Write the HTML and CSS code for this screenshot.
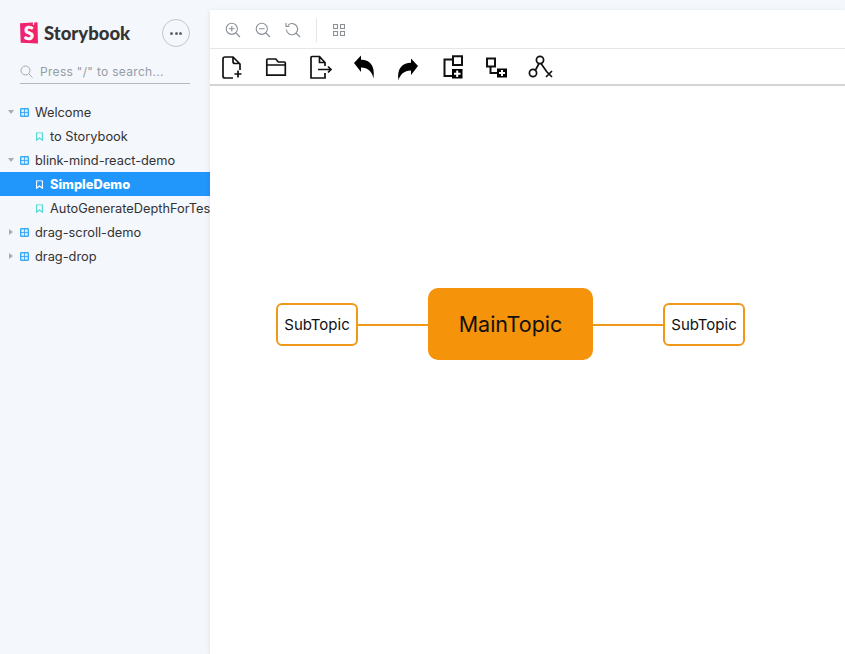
FILE: index.html
```html
<!DOCTYPE html>
<html lang="en">
<head>
<meta charset="utf-8">
<title>Storybook</title>
<link rel="stylesheet" href="styles.css">
</head>
<body>
<div class="app">
  <aside class="sidebar">
    <div class="brand">
      <div class="logo">
        <svg class="logo-mark" width="18" height="22" viewBox="0 0 18 22"><path d="M0 1.200 13 .6l-.1 2.400 1.200-.1.100-2.400L17.500 .3 18 21.500 .7 20.700z" fill="#f0246e"/><text x="9" y="17.500" class="logo-s">S</text></svg>
        <span class="logo-text">Storybook</span>
      </div>
      <button class="menu-btn" type="button"><span class="dot"></span><span class="dot"></span><span class="dot"></span></button>
    </div>
    <div class="search">
      <svg width="13" height="13" viewBox="0 0 13 13" fill="none" stroke="#a3abb3" stroke-width="1"><circle cx="5.500" cy="5.500" r="4.500"/><path d="M9 9l3.500 3.500"/></svg>
      <span class="search-text">Press "/" to search...</span>
    </div>
    <nav class="tree">
      <div class="row group"><svg class="arrow" width="6" height="4" viewBox="0 0 6 4"><path d="M0 0h6L3 4z"/></svg><svg class="comp" width="9" height="9" viewBox="0 0 10 10"><use href="#comp"/></svg><span>Welcome</span></div>
      <div class="row story"><svg class="mark" width="7" height="9" viewBox="0 0 8 10"><use href="#mark"/></svg><span>to Storybook</span></div>
      <div class="row group"><svg class="arrow" width="6" height="4" viewBox="0 0 6 4"><path d="M0 0h6L3 4z"/></svg><svg class="comp" width="9" height="9" viewBox="0 0 10 10"><use href="#comp"/></svg><span>blink-mind-react-demo</span></div>
      <div class="row story selected"><svg class="mark" width="7" height="9" viewBox="0 0 8 10"><use href="#mark"/></svg><span>SimpleDemo</span></div>
      <div class="row story"><svg class="mark" width="7" height="9" viewBox="0 0 8 10"><use href="#mark"/></svg><span>AutoGenerateDepthForTest</span></div>
      <div class="row group"><svg class="arrow side" width="4" height="6" viewBox="0 0 4 6"><path d="M0 0l4 3-4 3z"/></svg><svg class="comp" width="9" height="9" viewBox="0 0 10 10"><use href="#comp"/></svg><span>drag-scroll-demo</span></div>
      <div class="row group"><svg class="arrow side" width="4" height="6" viewBox="0 0 4 6"><path d="M0 0l4 3-4 3z"/></svg><svg class="comp" width="9" height="9" viewBox="0 0 10 10"><use href="#comp"/></svg><span>drag-drop</span></div>
    </nav>
  </aside>

  <main class="main">
    <div class="sb-toolbar">
      <svg width="16" height="16" viewBox="0 0 16 16" class="sb-icon"><circle cx="6.800" cy="6.800" r="5.600"/><path d="M11 11l4 4M6.800 4v5.600M4 6.800h5.600"/></svg>
      <svg width="16" height="16" viewBox="0 0 16 16" class="sb-icon"><circle cx="6.800" cy="6.800" r="5.600"/><path d="M11 11l4 4M4 6.800h5.600"/></svg>
      <svg width="16" height="16" viewBox="0 0 16 16" class="sb-icon"><path d="M3.200 3A5.600 5.600 0 1 1 1.400 7.500M11 11l4 4M1 1v3.400h3.400"/></svg>
      <span class="divider"></span>
      <svg width="12" height="12" viewBox="0 0 12 12" class="sb-icon"><rect x=".5" y=".5" width="4" height="4"/><rect x="7.500" y=".5" width="4" height="4"/><rect x=".5" y="7.500" width="4" height="4"/><rect x="7.500" y="7.500" width="4" height="4"/></svg>
    </div>
    <div class="app-toolbar">
      <svg class="tool" width="24" height="24" viewBox="0 0 24 24"><path d="M13 23H5a2 2 0 0 1-2-2V4a2 2 0 0 1 2-2h8l7 7v6M13 2.500v4a2 2 0 0 0 2 2h5M18 15.500v7M14.500 19h7"/></svg>
      <svg class="tool" width="24" height="24" viewBox="0 0 24 24"><path d="M2.800 20.200V5a1 1 0 0 1 1-1h8l2.500 3h6a1 1 0 0 1 1 1v12.200zM2.800 10H21.300"/></svg>
      <svg class="tool" width="24" height="24" viewBox="0 0 24 24"><path d="M17 11V7.500L11.500 1.500H4a1 1 0 0 0-1 1V23h14v-5M11.500 2v5.500H17M10 14.500h13M20 11.500l3 3-3 3"/></svg>
      <svg class="tool" width="24" height="24" viewBox="0 0 24 24"><path class="fill" d="M2 8L9 .5V4.800C17 4.800 23.500 10 21.500 23.500 20 16.500 16 12.800 9 12.500V17z"/></svg>
      <svg class="tool" width="24" height="24" viewBox="0 0 24 24"><path class="fill" d="M22 11L15 3.500V7.800C7 7.800.5 13 2.500 25.500 4 19.500 8 15.800 15 15.500V20z"/></svg>
      <svg class="tool" width="24" height="24" viewBox="0 0 24 24"><path class="thick" d="M13 4.500H4.500V21H12M13 1.200h9V10h-9z"/><path class="fill" d="M12 14h10.500v9.500H12z"/><path class="plus" d="M17.200 15.500v6.500M14 18.700h6.500"/></svg>
      <svg class="tool" width="24" height="24" viewBox="0 0 24 24"><path class="thick" d="M3 3.500h8v8H3zM6.500 11.500V18H13"/><path class="fill" d="M13 13.500h10v9H13z"/><path class="plus" d="M18 15v6M15 18h6"/></svg>
      <svg class="tool" width="24" height="24" viewBox="0 0 24 24"><circle cx="12" cy="5" r="3.600"/><circle cx="5" cy="18" r="3.600"/><path d="M11 8.500L7.500 15M13 8.500L19 17M18 16l6 6M24 16l-6 6"/></svg>
    </div>
    <div class="canvas">
      <span class="link link-left"></span>
      <span class="link link-right"></span>
      <div class="node sub sub-left">SubTopic</div>
      <div class="node main-topic">MainTopic</div>
      <div class="node sub sub-right">SubTopic</div>
    </div>
  </main>
</div>
<svg class="defs" width="0" height="0">
  <defs>
    <symbol id="comp" viewBox="0 0 10 10"><rect x="0" y="0" width="10" height="10" rx="1.500" fill="#3aa8f5"/><rect x="1.500" y="1.500" width="3" height="3" fill="#d4eeff"/><rect x="5.500" y="1.500" width="3" height="3" fill="#d4eeff"/><rect x="1.500" y="5.500" width="3" height="3" fill="#d4eeff"/><rect x="5.500" y="5.500" width="3" height="3" fill="#d4eeff"/></symbol>
    <symbol id="mark" viewBox="0 0 8 10"><path d="M.7.7h6.600v8.500L4 6.700.7 9.200z" fill="none" stroke="currentColor" stroke-width="1.300"/></symbol>
  </defs>
</svg>
</body>
</html>
```
FILE: styles.css
```css
* { box-sizing: border-box; }
html, body { margin: 0; height: 100%; overflow: hidden; }
body { background: #f4f7fc; font-family: Inter, "Liberation Sans", sans-serif; color: #333; }
.app { display: flex; width: 845px; height: 654px; }
.defs { position: absolute; }

.sidebar { width: 210px; flex: none; overflow: hidden; padding-top: 20px; }
.brand { display: flex; align-items: center; justify-content: space-between; padding: 0 20px; height: 26px; }
.logo { display: flex; align-items: center; gap: 6px; }
.logo-mark { display: block; }
.logo-s { font: 900 18px Lato, sans-serif; fill: #fff; stroke: #fff; stroke-width: .5px; text-anchor: middle; }
.logo-text { font: 900 18.500px/22px Lato, sans-serif; color: #333; }
.menu-btn { width: 28px; height: 28px; border: 1px solid #c2c7cc; border-radius: 50%; background: transparent; display: flex; align-items: center; justify-content: center; gap: 1.500px; padding: 0; }
.dot { width: 3px; height: 3px; border-radius: 50%; background: #666; }

.search { margin: 14px 20px 0; height: 24px; display: flex; align-items: center; gap: 7px; border-bottom: 1px solid #b4b8bd; }
.search-text { font-size: 12px; color: #969da4; letter-spacing: .3px; }

.tree { margin-top: 16px; }
.row { height: 24px; display: flex; align-items: center; color: #333; white-space: nowrap; }
.row span { font-size: 12.800px; }
.group { padding-left: 8px; }
.arrow { fill: #a6adb4; flex: none; margin-right: 6px; }
.arrow.side { margin-left: 1px; margin-right: 7px; }
.comp { flex: none; margin-right: 6px; }
.story { padding-left: 36px; }
.story .mark { flex: none; margin-right: 7px; color: #4fd6d3; }
.selected { background: #2196fb; color: #fff; font-weight: 800; }
.selected .mark { color: #fff; }

.main { flex: 1; margin-top: 10px; background: #fff; box-shadow: 0 1px 5px rgba(0,0,0,.1); display: flex; flex-direction: column; min-width: 0; }
.sb-toolbar { height: 39px; flex: none; display: flex; align-items: center; gap: 14px; padding: 1px 0 0 15px; border-bottom: 1px solid #e6e6e6; }
.sb-icon { fill: none; stroke: #8a9096; stroke-width: 1.100; flex: none; }
.divider { width: 1px; height: 24px; background: #e6e6e6; margin-left: 1px; margin-right: 2px; }
.app-toolbar { height: 37px; flex: none; display: flex; align-items: center; gap: 20px; padding: 1px 0 0 10px; border-bottom: 2px solid #d4d4d4; }
.tool { flex: none; fill: none; stroke: #111; stroke-width: 1.700; overflow: visible; }
.tool .fill { fill: #000; stroke: none; }
.tool .thick { stroke-width: 2; fill: none; }
.tool .plus { stroke: #fff; stroke-width: 2; }

.canvas { position: relative; flex: 1; }
.node { position: absolute; display: flex; align-items: center; justify-content: center; color: #111; background: #fff; }
.sub { width: 82px; height: 43px; border: 2px solid #ef981a; border-radius: 6px; font-size: 15px; padding-bottom: 1px; }
.sub-left { left: 66px; top: 217px; }
.sub-right { left: 453px; top: 217px; }
.main-topic { left: 218px; top: 202px; width: 165px; height: 72px; background: #f5930a; border-radius: 10px; font-size: 21.500px; padding-bottom: 1px; }
.link { position: absolute; height: 2px; top: 238px; background: #ef981a; }
.link-left { left: 148px; width: 70px; }
.link-right { left: 383px; width: 70px; }
```
